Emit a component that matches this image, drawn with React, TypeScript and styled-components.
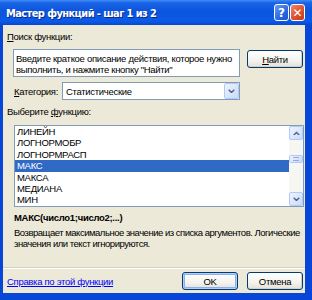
import React from 'react';
import styled, { createGlobalStyle } from 'styled-components';

const GlobalStyle = createGlobalStyle`
  html, body {
    margin: 0;
    padding: 0;
    background: #ffffff;
  }
  body {
    font-family: 'Liberation Sans', Arial, sans-serif;
    font-size: 9.5px;
    letter-spacing: -0.3px;
    color: #000000;
  }
`;

const Window = styled.div`
  width: 312px;
  height: 300px;
  display: flex;
  flex-direction: column;
  background: #0846d8;
  padding: 0 7px 7px 3px;
  box-sizing: border-box;
  overflow: hidden;
`;

const TitleBar = styled.div`
  height: 25px;
  margin: 0 -7px 0 -3px;
  padding: 0 7px 0 6px;
  display: flex;
  align-items: center;
  background: linear-gradient(
    to bottom,
    #3d8bf5 0%,
    #1a63e6 12%,
    #0a55de 45%,
    #0b5ae6 85%,
    #0845cf 100%
  );
`;

const TitleText = styled.span`
  flex: 1;
  color: #ffffff;
  font-family: 'DejaVu Sans Condensed', 'DejaVu Sans', sans-serif;
  font-weight: bold;
  font-size: 11px;
  letter-spacing: -0.6px;
  text-shadow: 1px 1px 0 #0a2a8a;
  padding-top: 1px;
`;

const CaptionButton = styled.div<{ kind: 'help' | 'close' }>`
  width: 15px;
  height: 17px;
  margin-left: 1px;
  box-sizing: border-box;
  border: 1px solid #ffffff;
  border-radius: 3px;
  display: flex;
  align-items: center;
  justify-content: center;
  color: #ffffff;
  font-family: 'DejaVu Sans', sans-serif;
  font-weight: bold;
  font-size: 12px;
  letter-spacing: 0;
  background: ${({ kind }) =>
    kind === 'help'
      ? 'linear-gradient(135deg, #6a9cf5 0%, #2a66e0 60%, #1f55cc 100%)'
      : 'linear-gradient(135deg, #f08a6a 0%, #e0502c 55%, #c93a17 100%)'};
`;

const Panel = styled.div`
  flex: 1;
  background: #ece9d8;
  display: flex;
  flex-direction: column;
  padding-right: 2px;
`;

const Label = styled.div<{ indent: number; top: number }>`
  margin: ${({ top }) => top}px 0 0 ${({ indent }) => indent}px;
  line-height: 12px;
  height: 12px;
  white-space: nowrap;
`;

const Acc = styled.span`
  text-decoration: underline;
`;

const SearchRow = styled.div`
  display: flex;
  align-items: flex-start;
  gap: 7px;
  margin: 6px 0 0 10px;
`;

const SearchBox = styled.div`
  width: 227px;
  height: 28px;
  box-sizing: border-box;
  border: 1px solid #7f9db9;
  background: #ffffff;
  padding: 3px 0 0 2px;
  line-height: 11px;
  white-space: nowrap;
  overflow: hidden;
`;

const PushButton = styled.div<{ isDefault?: boolean }>`
  width: 56px;
  height: 18px;
  box-sizing: border-box;
  border: 1px solid #003c74;
  border-radius: 3px;
  display: flex;
  align-items: center;
  justify-content: center;
  background: linear-gradient(to bottom, #ffffff 0%, #f4f3ee 60%, #e3e1d6 100%);
  box-shadow: ${({ isDefault }) =>
    isDefault
      ? 'inset 0 0 0 1px #b6cdf5, inset 0 0 0 2px #8cb0ee'
      : 'inset -1px -1px 0 #d6d0c0'};
`;

const CategoryRow = styled.div`
  display: flex;
  align-items: center;
  margin: 5px 0 0 11px;
`;

const CategoryLabel = styled.div`
  width: 48px;
  white-space: nowrap;
`;

const Combo = styled.div`
  width: 178px;
  height: 18px;
  box-sizing: border-box;
  border: 1px solid #7f9db9;
  background: #ffffff;
  display: flex;
  align-items: center;
  padding-left: 3px;
`;

const ComboText = styled.span`
  flex: 1;
`;

const ScrollButton = styled.div<{ w: number; h: number }>`
  width: ${({ w }) => w}px;
  height: ${({ h }) => h}px;
  box-sizing: border-box;
  border: 1px solid #b4c8f6;
  border-radius: 2px;
  background: linear-gradient(135deg, #eef4fe 0%, #c9daf8 100%);
  display: flex;
  align-items: center;
  justify-content: center;
`;

const List = styled.div`
  margin: 7px 0 0 11px;
  width: 290px;
  height: 82px;
  box-sizing: border-box;
  border: 1px solid #7f9db9;
  background: #ffffff;
  display: flex;
`;

const Items = styled.div`
  flex: 1;
  display: flex;
  flex-direction: column;
`;

const Item = styled.div<{ selected?: boolean }>`
  height: 11.4px;
  line-height: 11.4px;
  padding-left: 2px;
  white-space: nowrap;
  background: ${({ selected }) => (selected ? '#316ac5' : 'transparent')};
  color: ${({ selected }) => (selected ? '#ffffff' : '#000000')};
`;

const ScrollBar = styled.div`
  width: 14px;
  background: #f6f6f2;
  display: flex;
  flex-direction: column;
  align-items: center;
`;

const ScrollSpace = styled.div<{ h: number }>`
  height: ${({ h }) => h}px;
  flex: none;
`;

const Signature = styled.div`
  margin: 5px 0 0 11px;
  line-height: 12px;
  font-weight: bold;
  white-space: nowrap;
`;

const Description = styled.div`
  margin: 3px 0 0 11px;
  line-height: 11px;
  letter-spacing: -0.48px;
  white-space: nowrap;
`;

const Separator = styled.div`
  margin-top: 18px;
  margin-right: -2px;
  height: 1px;
  background: #d4d0c0;
  border-bottom: 1px solid #ffffff;
`;

const Footer = styled.div`
  display: flex;
  align-items: center;
  margin: 3px 0 0 4px;
  gap: 9px;
`;

const HelpLink = styled.a`
  flex: 1;
  color: #0000ff;
  text-decoration: underline;
  white-space: nowrap;
`;

const Chevron = ({ up, size = 7 }: { up?: boolean; size?: number }) => (
  <svg width={size} height={size * 0.7} viewBox="0 0 10 7">
    <path
      d={up ? 'M1 6 L5 2 L9 6' : 'M1 1 L5 5 L9 1'}
      fill="none"
      stroke="#4d6185"
      strokeWidth="2"
    />
  </svg>
);

const Grip = () => (
  <svg width="6" height="4" viewBox="0 0 6 4">
    <path d="M0 0.5H6M0 3.5H6" stroke="#8faae6" strokeWidth="1" />
  </svg>
);

const functions = [
  'ЛИНЕЙН',
  'ЛОГНОРМОБР',
  'ЛОГНОРМРАСП',
  'МАКС',
  'МАКСА',
  'МЕДИАНА',
  'МИН',
];

export default function App() {
  return (
    <>
      <GlobalStyle />
      <Window>
        <TitleBar>
          <TitleText>Мастер функций - шаг 1 из 2</TitleText>
          <CaptionButton kind="help">?</CaptionButton>
          <CaptionButton kind="close">✕</CaptionButton>
        </TitleBar>
        <Panel>
          <Label indent={4} top={6}>
            <Acc>П</Acc>оиск функции:
          </Label>
          <SearchRow>
            <SearchBox>
              Введите краткое описание действия, которое нужно
              <br />
              выполнить, и нажмите кнопку "Найти"
            </SearchBox>
            <PushButton style={{ marginTop: 1 }}>
              <span>
                <Acc>Н</Acc>айти
              </span>
            </PushButton>
          </SearchRow>
          <CategoryRow>
            <CategoryLabel>
              <Acc>К</Acc>атегория:
            </CategoryLabel>
            <Combo>
              <ComboText>Статистические</ComboText>
              <ScrollButton w={15} h={16}>
                <Chevron />
              </ScrollButton>
            </Combo>
          </CategoryRow>
          <Label indent={4} top={6}>
            Выберите <Acc>ф</Acc>ункцию:
          </Label>
          <List>
            <Items>
              {functions.map((name) => (
                <Item key={name} selected={name === 'МАКС'}>
                  {name}
                </Item>
              ))}
            </Items>
            <ScrollBar>
              <ScrollButton w={14} h={14}>
                <Chevron up />
              </ScrollButton>
              <ScrollSpace h={15} />
              <ScrollButton w={14} h={8}>
                <Grip />
              </ScrollButton>
              <ScrollSpace h={29} />
              <ScrollButton w={14} h={14}>
                <Chevron />
              </ScrollButton>
            </ScrollBar>
          </List>
          <Signature>МАКС(число1;число2;...)</Signature>
          <Description>
            Возвращает максимальное значение из списка аргументов. Логические
            <br />
            значения или текст игнорируются.
          </Description>
          <Separator />
          <Footer>
            <HelpLink href="#">Справка по этой функции</HelpLink>
            <PushButton isDefault>OK</PushButton>
            <PushButton>Отмена</PushButton>
          </Footer>
        </Panel>
      </Window>
    </>
  );
}
